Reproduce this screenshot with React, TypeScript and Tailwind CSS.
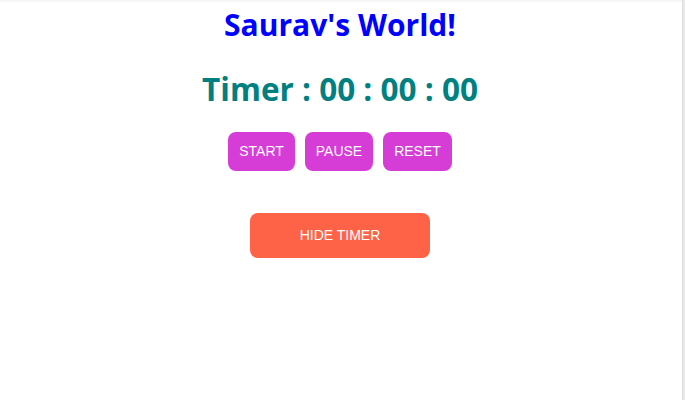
export default function App() {
  return (
    <div className="w-[685px] h-[400px] bg-white flex overflow-hidden">
      <div className="w-[682px] h-full pr-[2px] border-t-2 border-[#f6f6f6] flex flex-col items-center">
        <h1
          className="mt-[2px] text-[30px] leading-[42px] font-bold text-[#0000ff]"
          style={{ fontFamily: '"Segoe UI", "Open Sans", sans-serif' }}
        >
          Saurav's World!
        </h1>
        <h2
          className="mt-[22px] text-[31.5px] leading-[42px] font-bold text-[#008080]"
          style={{ fontFamily: '"Segoe UI", "Open Sans", sans-serif' }}
        >
          Timer : 00 : 00 : 00
        </h2>
        <div className="mt-[22px] flex gap-[10px] font-['Liberation_Sans',Arial,sans-serif] text-[14px] text-white">
          <button className="w-[67px] h-[39px] rounded-[8px] bg-[#d63cd6]">START</button>
          <button className="w-[68px] h-[39px] rounded-[8px] bg-[#d63cd6]">PAUSE</button>
          <button className="w-[69px] h-[39px] rounded-[8px] bg-[#d63cd6]">RESET</button>
        </div>
        <button className="mt-[42px] w-[180px] h-[45px] rounded-[8px] bg-[#ff6347] font-['Liberation_Sans',Arial,sans-serif] text-[14px] text-white">
          HIDE TIMER
        </button>
      </div>
      <div className="w-[3px] h-full bg-gradient-to-r from-[#dcdcdc] to-[#eeeeee]" />
    </div>
  );
}
